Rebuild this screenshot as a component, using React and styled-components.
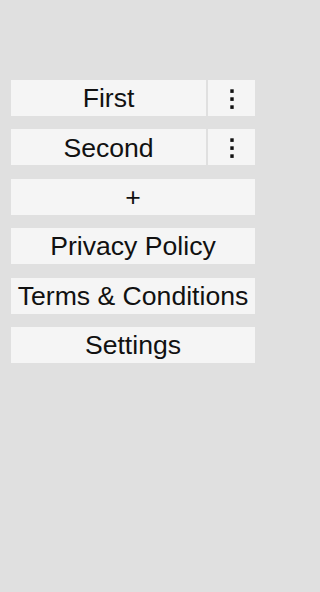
import React from "react";
import styled, { createGlobalStyle } from "styled-components";

const GlobalStyle = createGlobalStyle`
  html, body {
    margin: 0;
    padding: 0;
    background: #e0e0e0;
  }
  * { box-sizing: border-box; }
`;

const Screen = styled.main`
  width: 266px;
  min-height: 592px;
  padding: 80px 11px 0;
  display: flex;
  flex-direction: column;
  align-items: stretch;
  gap: 13.4px;
  font-family: "Liberation Sans", Arial, sans-serif;
`;

const Row = styled.div`
  display: flex;
  gap: 2px;
  height: 36px;
  flex: none;
`;

const Button = styled.button`
  flex: ${(p) => (p.$narrow ? "0 0 47px" : p.$grow ? "1 1 auto" : "none")};
  height: 36px;
  border: none;
  border-radius: 0;
  padding: 1px 0 0;
  margin: 0;
  background: #f5f5f5;
  color: #111;
  font-family: inherit;
  font-size: 26.6px;
  line-height: 1;
  display: flex;
  align-items: center;
  justify-content: center;
  white-space: nowrap;
  cursor: pointer;
`;

const Kebab = () => (
  <svg width="4" height="20" viewBox="0 0 4 20" aria-hidden="true">
    <rect x="0.3" y="0.3" width="3.4" height="3.6" fill="#111" />
    <rect x="0.3" y="8.3" width="3.4" height="3.6" fill="#111" />
    <rect x="0.3" y="16.3" width="3.4" height="3.6" fill="#111" />
  </svg>
);

const lists = ["First", "Second"];
const links = ["Privacy Policy", "Terms & Conditions", "Settings"];

export default function App() {
  return (
    <>
      <GlobalStyle />
      <Screen>
        {lists.map((name) => (
          <Row key={name}>
            <Button $grow>{name}</Button>
            <Button $narrow aria-label="More">
              <Kebab />
            </Button>
          </Row>
        ))}
        <Button>+</Button>
        {links.map((label) => (
          <Button key={label}>{label}</Button>
        ))}
      </Screen>
    </>
  );
}
